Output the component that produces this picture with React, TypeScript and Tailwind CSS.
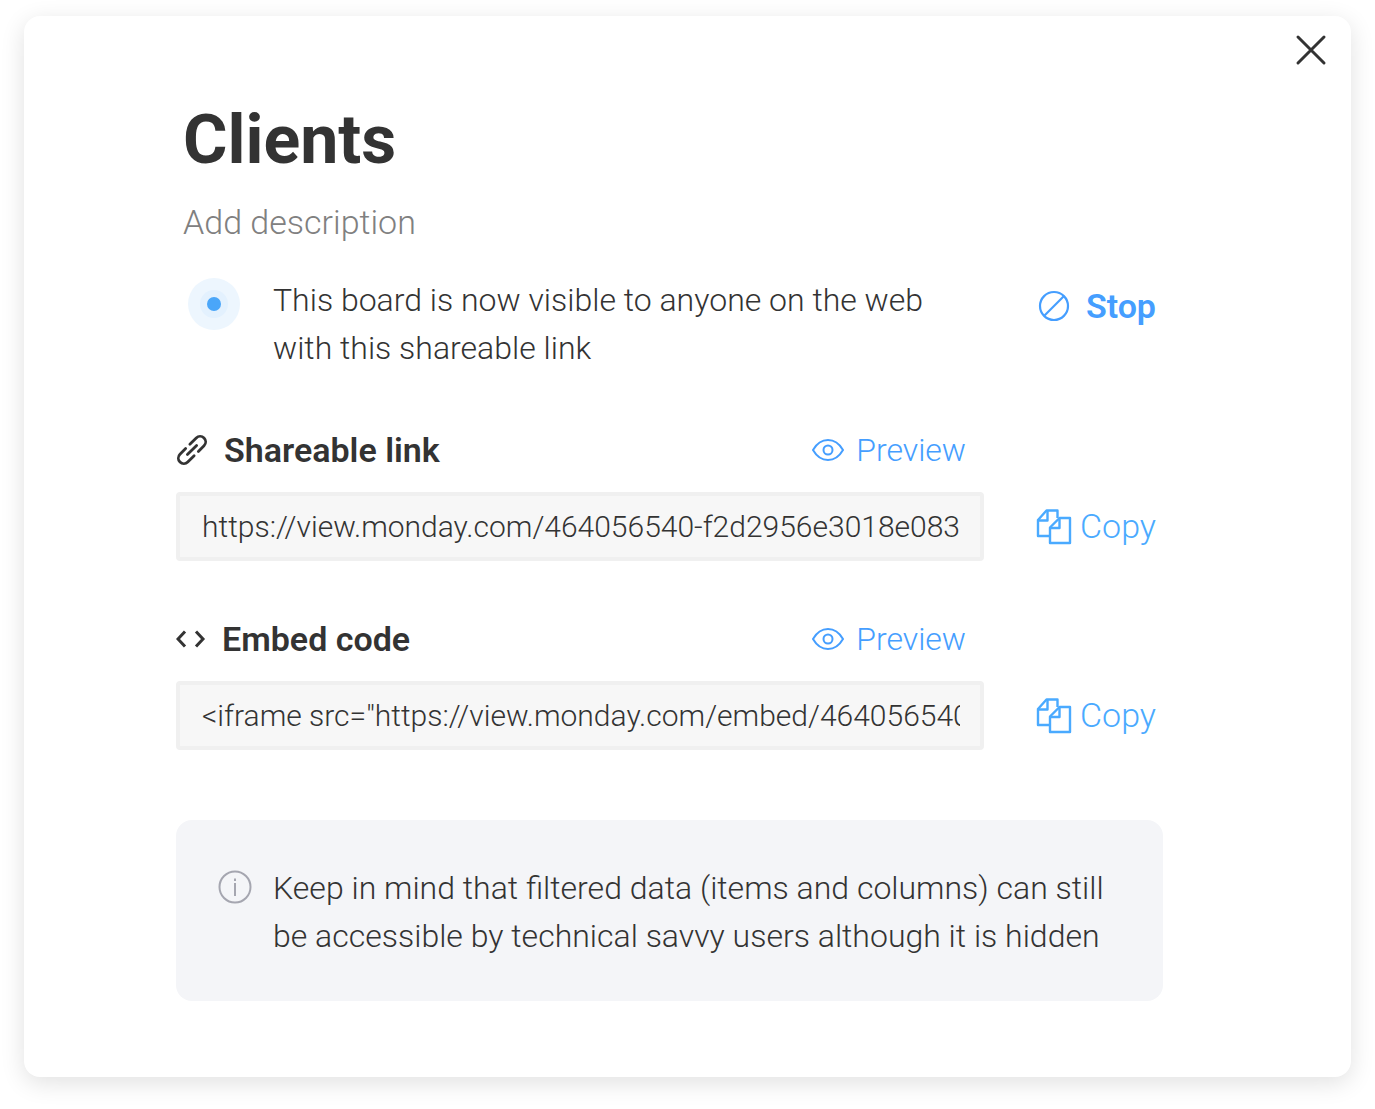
import React from "react";

function EyeIcon() {
  return (
    <svg width="32" height="22" viewBox="0 0 32 22" fill="none" stroke="currentColor" strokeWidth="2" aria-hidden="true">
      <path d="M1 11C5 4 10 1 16 1s11 3 15 10c-4 7-9 10-15 10S5 18 1 11z" strokeLinejoin="round" />
      <circle cx="16" cy="11" r="4.5" />
    </svg>
  );
}

function CopyIcon() {
  return (
    <svg width="36" height="36" viewBox="0 0 36 36" fill="none" stroke="currentColor" strokeWidth="2.4" strokeLinejoin="round" aria-hidden="true">
      <path d="M13 27H2V11L10.500 1.500H21.500V9" />
      <path d="M2.500 11.500H11.500V2" />
      <path d="M14 18.500L23.500 9H34v25H14z" />
      <path d="M14.500 19H23.500V9.500" />
    </svg>
  );
}

function LinkIcon() {
  return (
    <svg width="32" height="32" viewBox="0 0 32 32" fill="none" stroke="currentColor" strokeWidth="2.8" strokeLinecap="round" aria-hidden="true">
      <g transform="rotate(-45 16 16)">
        <path d="M18.500 10.500h9a5.500 5.500 0 0 1 0 11h-8" />
        <path d="M13.500 21.500h-9a5.500 5.500 0 0 1 0-11h8" />
        <path d="M9.500 16h13" />
      </g>
    </svg>
  );
}

function CodeIcon() {
  return (
    <svg width="30" height="18" viewBox="0 0 30 18" fill="none" stroke="currentColor" strokeWidth="3" aria-hidden="true">
      <path d="M9 1.500L2 9l7 7.500M20 1.500L27 9l-7 7.500" />
    </svg>
  );
}

type ShareFieldProps = { id: string; label: string; value: string; icon: React.ReactNode };

function ShareField({ id, label, value, icon }: ShareFieldProps) {
  return (
    <section className="grid grid-cols-[minmax(0,1fr)_179px] gap-y-[18px]">
      <div className="flex h-12 items-center justify-between pr-[18px]">
        <label htmlFor={id} className="flex items-center gap-4 text-[34px] leading-12 font-semibold">
          {icon}
          {label}
        </label>
        <button type="button" className="flex items-center gap-3 text-[32px] leading-12 font-light text-[#459eff]">
          <EyeIcon />
          Preview
        </button>
      </div>
      <input id={id} readOnly value={value} className="col-start-1 h-[69px] w-full min-w-0 rounded-sm border-4 border-[#f0f0f0] bg-[#f7f7f7] pr-5 pl-[22px] text-[30px] font-light outline-none" />
      <button type="button" className="flex items-center gap-2 justify-self-end pr-[7px] text-[34px] font-light text-[#4aaaff]">
        <CopyIcon />
        Copy
      </button>
    </section>
  );
}

export default function App() {
  return (
    <main className="bg-white px-6 pt-4 pb-8 font-[Roboto,sans-serif] text-[#333333]">
      <div role="dialog" aria-labelledby="title" className="rounded-2xl bg-white pb-[76px] shadow-[0_6px_24px_rgba(0,0,0,0.12)]">
        <div className="flex justify-end pt-[18px] pr-6">
          <button type="button" aria-label="Close" className="p-0">
            <svg width="32" height="32" viewBox="0 0 32 32" stroke="currentColor" strokeWidth="3" strokeLinecap="round" aria-hidden="true">
              <path d="M3 3l26 26M29 3L3 29" />
            </svg>
          </button>
        </div>
        <div className="pr-[188px] pl-[152px]">
          <h1 id="title" className="mt-[30px] pl-[7px] text-[68px] leading-[88px] font-bold">Clients</h1>
          <button type="button" className="mt-3.5 block pl-[7px] text-[34px] leading-12 font-light text-[#808080]">Add description</button>
          <div className="mt-[30px] flex items-start">
            <span className="mt-0.5 ml-3 flex size-[52px] shrink-0 items-center justify-center rounded-full bg-[#edf6fe]">
              <span className="flex size-7 items-center justify-center rounded-full bg-[#e3f1fe]">
                <span className="size-3.5 rounded-full bg-[#4aa6f9]" />
              </span>
            </span>
            <p className="ml-[33px] w-[680px] text-[32px] leading-12 font-light">This board is now visible to anyone on the web with this shareable link</p>
            <button type="button" className="mt-1.5 mr-[7px] ml-auto flex items-center gap-4 text-[34px] leading-12 font-semibold text-[#459eff]">
              <svg width="32" height="32" viewBox="0 0 32 32" fill="none" stroke="currentColor" strokeWidth="2.2" aria-hidden="true">
                <circle cx="16" cy="16" r="14" />
                <path d="M6 26L26 6" />
              </svg>
              Stop
            </button>
          </div>
          <div className="mt-[54px] flex flex-col gap-[54px]">
            <ShareField id="link" label="Shareable link" value="https://view.monday.com/464056540-f2d2956e3018e083" icon={<LinkIcon />} />
            <ShareField id="embed" label="Embed code" value={'<iframe src="https://view.monday.com/embed/464056540-f2d2956e3018e083"></iframe>'} icon={<CodeIcon />} />
          </div>
          <aside className="mt-[70px] flex items-start gap-[21px] rounded-2xl bg-[#f4f5f8] pt-11 pr-10 pb-[41px] pl-[42px]">
            <svg className="mt-1.5 shrink-0" width="34" height="34" viewBox="0 0 34 34" fill="none" stroke="#a5a6b0" strokeWidth="2" aria-hidden="true">
              <circle cx="17" cy="17" r="15.5" />
              <path d="M17 13v13M17 8.500v2.500" />
            </svg>
            <p className="text-[32px] leading-12 font-light">Keep in mind that filtered data (items and columns) can still be accessible by technical savvy users although it is hidden</p>
          </aside>
        </div>
      </div>
    </main>
  );
}
